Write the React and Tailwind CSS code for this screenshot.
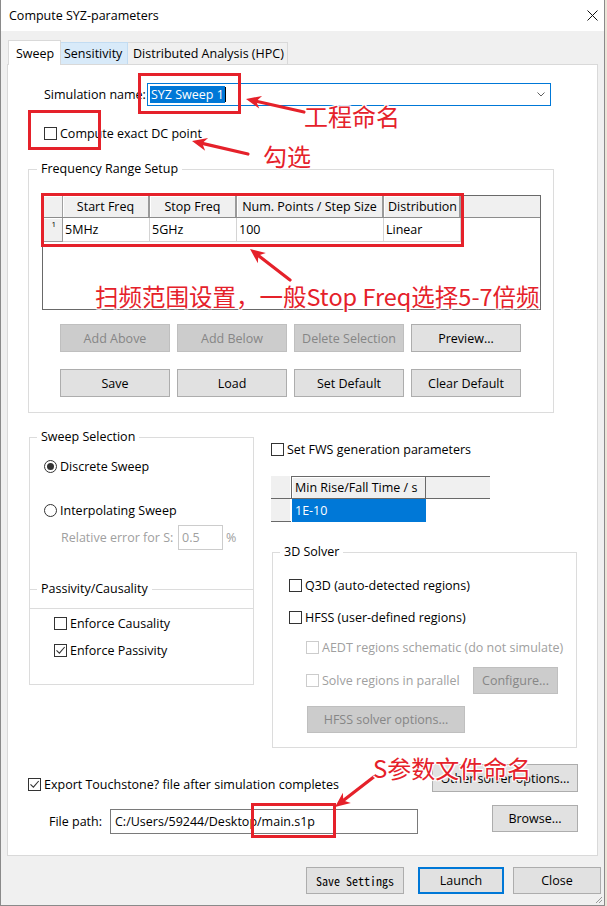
import React from "react";

const RED = "#e5212a";

function Check({ checked = false, disabled = false }) {
  return (
    <span
      className={`flex h-[13px] w-[13px] shrink-0 items-center justify-center border bg-white ${
        disabled ? "border-[#cccccc]" : "border-[#333333]"
      }`}
    >
      {checked && (
        <svg width="11" height="11" viewBox="0 0 11 11">
          <path d="M1.5 5.3l2.9 2.9 5.3-6.2" fill="none" stroke="#333" strokeWidth="1.1" />
        </svg>
      )}
    </span>
  );
}

function Radio({ checked = false }) {
  return (
    <span className="flex h-[13px] w-[13px] shrink-0 items-center justify-center rounded-full border border-[#333333] bg-white">
      {checked && <span className="h-[7px] w-[7px] rounded-full bg-[#333333]" />}
    </span>
  );
}

function CheckRow({ label, checked, disabled, className = "" }) {
  return (
    <div className={`flex h-[17px] items-center gap-[3px] ${className}`}>
      <Check checked={checked} disabled={disabled} />
      <span className={disabled ? "text-[#a0a0a0]" : ""}>{label}</span>
    </div>
  );
}

function Btn({ children, disabled, className = "" }) {
  return (
    <div
      className={`flex shrink-0 items-center justify-center border ${
        disabled
          ? "border-[#bfbfbf] bg-[#cccccc] text-[#868686]"
          : "border-[#adadad] bg-[#e1e1e1] text-black"
      } ${className}`}
    >
      {children}
    </div>
  );
}

const freqCols = [
  { head: "Start Freq", val: "5MHz", w: "w-[87px]", align: "justify-center" },
  { head: "Stop Freq", val: "5GHz", w: "w-[87px]", align: "justify-center" },
  { head: "Num. Points / Step Size", val: "100", w: "w-[147px]", align: "justify-center" },
  { head: "Distribution", val: "Linear", w: "w-[77px]", align: "pl-[4px]" },
];

function FreqTable() {
  return (
    <div className="ml-[13px] mt-[17px] h-[115px] w-[499px] border border-[#696969] bg-white">
      <div className="flex h-[22px] border-b border-[#8c8c8c] bg-[#f0f0f0]">
        <div className="w-[20px] border-r border-[#a0a0a0] shadow-[inset_1px_1px_0_#fff]" />
        {freqCols.map((c) => (
          <div
            key={c.head}
            className={`flex items-center whitespace-nowrap border-r-2 border-[#9a9a9a] shadow-[inset_1px_1px_0_#fff] ${c.w} ${c.align}`}
          >
            {c.head}
          </div>
        ))}
      </div>
      <div className="flex h-[24px]">
        <div className="flex w-[20px] justify-end border-b border-r border-[#9a9a9a] bg-[#f0f0f0] pr-[6px] text-[8px] leading-[12px] shadow-[inset_1px_1px_0_#fff]">
          1
        </div>
        {freqCols.map((c) => (
          <div
            key={c.val}
            className={`flex items-center border-b border-r border-[#d4d4d4] pl-[2px] ${c.w}`}
          >
            {c.val}
          </div>
        ))}
      </div>
    </div>
  );
}

function FwsTable() {
  return (
    <div className="mt-[18px] flex flex-col">
      <div className="flex h-[23px]">
        <div className="w-[20px] border-b border-[#696969] bg-[#f0f0f0] shadow-[inset_-1px_0_0_#fff]" />
        <div className="flex w-[135px] items-center border-x border-y border-[#696969] bg-[#f0f0f0] pl-[3px] shadow-[inset_1px_1px_0_#fff]">
          Min Rise/Fall Time / s
        </div>
        <div className="w-[64px] border-y border-[#696969] bg-[#f0f0f0]" />
      </div>
      <div className="flex h-[23px]">
        <div className="w-[20px] border-b border-[#696969] bg-[#f0f0f0] shadow-[inset_-1px_0_0_#fff]" />
        <div className="ml-[1px] flex w-[134px] items-center bg-[#0078d7] pl-[3px] text-white">
          1E-10
        </div>
      </div>
    </div>
  );
}

function arrowPts(x1, y1, x2, y2) {
  const dx = x2 - x1;
  const dy = y2 - y1;
  const d = Math.hypot(dx, dy);
  const ux = dx / d;
  const uy = dy / d;
  const len = 15;
  const half = 6.5;
  const bx = x2 - ux * len;
  const by = y2 - uy * len;
  const nx = x2 - ux * len * 0.7;
  const ny = y2 - uy * len * 0.7;
  return {
    head: `${x2},${y2} ${bx - uy * half},${by + ux * half} ${nx},${ny} ${bx + uy * half},${by - ux * half}`,
    line: [x1, y1, nx, ny],
  };
}

const arrows = [
  [304, 112, 246, 99],
  [248, 154, 192, 141],
  [290, 280, 250, 249],
  [375, 776, 335, 807],
];

const boxes = [
  [139.5, 74.5, 100, 38],
  [29.5, 111.5, 70, 37],
  [42.5, 194.5, 420, 51],
  [252.5, 804.5, 82, 32],
];

const note =
  "absolute whitespace-nowrap font-['Noto_Sans_CJK_SC',sans-serif] leading-none text-[#e5212a] [text-shadow:-1px_-1px_0_#fff,1px_-1px_0_#fff,-1px_1px_0_#fff,1px_1px_0_#fff,0_0_3px_#fff]";

function Annotations() {
  return (
    <div className="pointer-events-none absolute inset-0">
      <svg width="607" height="906" className="absolute left-0 top-0">
        {boxes.map(([x, y, w, h], i) => (
          <rect key={i} x={x} y={y} width={w} height={h} fill="none" stroke={RED} strokeWidth="3" />
        ))}
        {arrows.map((a, i) => {
          const p = arrowPts(...a);
          return (
            <g key={i}>
              <line
                x1={p.line[0]}
                y1={p.line[1]}
                x2={p.line[2]}
                y2={p.line[3]}
                stroke={RED}
                strokeWidth="3.2"
                strokeLinecap="round"
              />
              <polygon points={p.head} fill={RED} />
            </g>
          );
        })}
      </svg>
      <span className={`${note} left-[304px] top-[104px] text-[24px]`}>工程命名</span>
      <span className={`${note} left-[263px] top-[144px] text-[24px]`}>勾选</span>
      <span className={`${note} left-[95px] top-[285px] text-[23.5px]`}>
        扫频范围设置，一般Stop Freq选择5-7倍频
      </span>
      <span className={`${note} left-[373px] top-[756px] text-[24px]`}>S参数文件命名</span>
    </div>
  );
}

export default function App() {
  return (
    <div className="relative h-[906px] w-[607px] overflow-hidden bg-[#ebe6d8] font-['Open_Sans',sans-serif] text-[12.5px] leading-[17px] text-black">
      <div className="flex h-[906px] w-[605px] flex-col border-x border-b border-[#8a8a8a] bg-[#f0f0f0]">
        {/* title bar */}
        <div className="flex h-[31px] shrink-0 items-center bg-white pl-[8px]">
          <span>Compute SYZ-parameters</span>
          <svg className="ml-auto mr-[6px]" width="11" height="11" viewBox="0 0 11 11">
            <path d="M0.5 0.5L10.5 10.5M10.5 0.5L0.5 10.5" stroke="#111" strokeWidth="1" />
          </svg>
        </div>

        <div className="relative flex flex-1 flex-col px-[6px] pt-[9px]">
          {/* tabs */}
          <div className="flex h-[24px] items-end pl-[1px]">
            <div className="relative z-10 mb-[-1px] flex h-[25px] w-[53px] items-center border-x border-t border-[#d9d9d9] bg-white pl-[7px]">
              Sweep
            </div>
            <div className="flex h-[22px] w-[67px] items-center border-r border-t border-[#c2dcf2] bg-[#d8eaf9] pl-[3px]">
              Sensitivity
            </div>
            <div className="flex h-[22px] w-[160px] items-center border-r border-t border-[#d9d9d9] pl-[5px]">
              Distributed Analysis (HPC)
            </div>
          </div>

          {/* tab page */}
          <div className="flex h-[792px] flex-col border border-[#d9d9d9] bg-white">
            <div className="ml-[36px] mt-[18px] flex items-center">
              <span className="w-[103px]">Simulation name:</span>
              <div className="flex h-[23px] w-[404px] items-center border border-[#0078d7] bg-white pl-[2px]">
                <span className="bg-[#0078d7] px-[1px] text-white">SYZ Sweep 1</span>
                <span className="h-[15px] w-[1px] bg-black" />
                <svg className="ml-auto mr-[5px]" width="8" height="5" viewBox="0 0 8 5">
                  <path d="M0.5 0.5L4 4L7.5 0.5" stroke="#606060" fill="none" />
                </svg>
              </div>
            </div>

            <CheckRow label="Compute exact DC point" className="ml-[36px] mt-[19px]" />

            {/* Frequency Range Setup */}
            <fieldset className="ml-[20px] mt-[18px] w-[526px] border border-[#dcdcdc] pb-[15px]">
              <legend className="ml-[8px] px-[4px] leading-[18px]">Frequency Range Setup</legend>
              <FreqTable />
              <div className="ml-[31px] mt-[14px] flex gap-[7px]">
                <Btn disabled className="h-[28px] w-[110px]">Add Above</Btn>
                <Btn disabled className="h-[28px] w-[110px]">Add Below</Btn>
                <Btn disabled className="h-[28px] w-[110px]">Delete Selection</Btn>
                <Btn className="h-[28px] w-[110px]">Preview...</Btn>
              </div>
              <div className="ml-[31px] mt-[17px] flex gap-[7px]">
                <Btn className="h-[28px] w-[110px]">Save</Btn>
                <Btn className="h-[28px] w-[110px]">Load</Btn>
                <Btn className="h-[28px] w-[110px]">Set Default</Btn>
                <Btn className="h-[28px] w-[110px]">Clear Default</Btn>
              </div>
            </fieldset>

            {/* middle section */}
            <div className="mt-[15px] flex items-start">
              <fieldset className="ml-[21px] flex h-[257px] w-[225px] flex-col border border-[#dcdcdc]">
                <legend className="ml-[7px] px-[4px] leading-[18px]">Sweep Selection</legend>
                <div className="ml-[14px] mt-[12px] flex h-[17px] items-center gap-[3px]">
                  <Radio checked />
                  <span>Discrete Sweep</span>
                </div>
                <div className="ml-[14px] mt-[27px] flex h-[17px] items-center gap-[3px]">
                  <Radio />
                  <span>Interpolating Sweep</span>
                </div>
                <div className="ml-[31px] mt-[6px] flex items-center text-[#a0a0a0]">
                  <span className="w-[117px]">Relative error for S:</span>
                  <div className="flex h-[25px] w-[45px] items-center border border-[#cccccc] bg-white pl-[3px]">
                    0.5
                  </div>
                  <span className="ml-[3px]">%</span>
                </div>
                <fieldset className="mt-[30px] border-t border-[#dcdcdc]">
                  <legend className="ml-[7px] px-[4px] leading-[18px]">Passivity/Causality</legend>
                  <div className="mt-[10px] border-t border-[#dcdcdc]" />
                  <CheckRow label="Enforce Causality" className="ml-[24px] mt-[6px]" />
                  <CheckRow label="Enforce Passivity" checked className="ml-[24px] mt-[10px]" />
                </fieldset>
              </fieldset>

              <div className="ml-[17px] flex flex-col">
                <CheckRow label="Set FWS generation parameters" className="mt-[13px]" />
                <FwsTable />
                <fieldset className="ml-[1px] mt-[21px] flex h-[205px] w-[305px] flex-col border border-[#dcdcdc]">
                  <legend className="ml-[7px] px-[4px] leading-[18px]">3D Solver</legend>
                  <CheckRow label="Q3D (auto-detected regions)" className="ml-[16px] mt-[16px]" />
                  <CheckRow label="HFSS (user-defined regions)" className="ml-[16px] mt-[15px]" />
                  <CheckRow
                    label="AEDT regions schematic (do not simulate)"
                    disabled
                    className="ml-[33px] mt-[13px]"
                  />
                  <div className="ml-[33px] mt-[11px] flex items-center">
                    <CheckRow label="Solve regions in parallel" disabled className="w-[167px]" />
                    <Btn disabled className="h-[27px] w-[85px]">Configure...</Btn>
                  </div>
                  <Btn disabled className="ml-[34px] mt-[12px] h-[27px] w-[158px]">
                    HFSS solver options...
                  </Btn>
                </fieldset>
              </div>
            </div>

            {/* export */}
            <div className="mt-[16px] flex items-start">
              <CheckRow
                label="Export Touchstone? file after simulation completes"
                checked
                className="ml-[20px] mt-[12px]"
              />
              <Btn className="ml-auto mr-[19px] h-[28px] w-[146px]">Other solver options...</Btn>
            </div>
            <div className="mt-[12px] flex items-start">
              <span className="ml-[41px] mt-[4px] flex h-[25px] w-[61px] items-center">File path:</span>
              <div className="mt-[4px] flex h-[25px] w-[308px] items-center border border-[#7a7a7a] bg-white pl-[4px]">
                C:/Users/59244/Desktop/main.s1p
              </div>
              <Btn className="ml-auto mr-[19px] h-[27px] w-[86px]">Browse...</Btn>
            </div>
          </div>

          {/* dialog buttons */}
          <div className="ml-[299px] mt-[11px] flex">
            <Btn className="h-[27px] w-[98px] font-['Noto_Sans_Mono_CJK_SC','Liberation_Mono',monospace] text-[12px]">
              Save Settings
            </Btn>
            <div className="ml-[14px] flex h-[27px] w-[86px] shrink-0 items-center justify-center border-2 border-[#0078d7] bg-[#e1e1e1]">
              Launch
            </div>
            <Btn className="ml-[9px] h-[27px] w-[88px]">Close</Btn>
          </div>

          <svg className="absolute bottom-[1px] right-[1px]" width="8" height="8" viewBox="0 0 8 8">
            <path d="M7 1L1 7M7 4L4 7M7 7L7 7" stroke="#9a9a9a" strokeWidth="1" />
          </svg>
        </div>
      </div>
      <Annotations />
    </div>
  );
}
